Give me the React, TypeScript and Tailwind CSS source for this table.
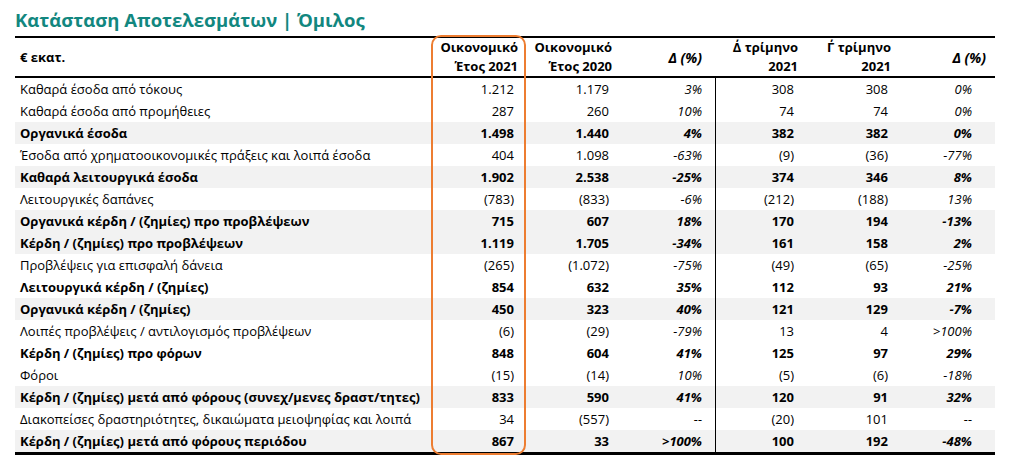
type Row = {
  label: string;
  values: string[];
  bold?: boolean;
  shaded?: boolean;
};

const rows: Row[] = [
  { label: "Καθαρά έσοδα από τόκους", values: ["1.212", "1.179", "3%", "308", "308", "0%"] },
  { label: "Καθαρά έσοδα από προμήθειες", values: ["287", "260", "10%", "74", "74", "0%"] },
  { label: "Οργανικά έσοδα", values: ["1.498", "1.440", "4%", "382", "382", "0%"], bold: true, shaded: true },
  { label: "Έσοδα από χρηματοοικονομικές πράξεις και λοιπά έσοδα", values: ["404", "1.098", "-63%", "(9)", "(36)", "-77%"] },
  { label: "Καθαρά λειτουργικά έσοδα", values: ["1.902", "2.538", "-25%", "374", "346", "8%"], bold: true, shaded: true },
  { label: "Λειτουργικές δαπάνες", values: ["(783)", "(833)", "-6%", "(212)", "(188)", "13%"] },
  { label: "Οργανικά κέρδη / (ζημίες) προ προβλέψεων", values: ["715", "607", "18%", "170", "194", "-13%"], bold: true, shaded: true },
  { label: "Κέρδη / (ζημίες) προ προβλέψεων", values: ["1.119", "1.705", "-34%", "161", "158", "2%"], bold: true, shaded: true },
  { label: "Προβλέψεις για επισφαλή δάνεια", values: ["(265)", "(1.072)", "-75%", "(49)", "(65)", "-25%"] },
  { label: "Λειτουργικά κέρδη / (ζημίες)", values: ["854", "632", "35%", "112", "93", "21%"], bold: true },
  { label: "Οργανικά κέρδη / (ζημίες)", values: ["450", "323", "40%", "121", "129", "-7%"], bold: true, shaded: true },
  { label: "Λοιπές προβλέψεις / αντιλογισμός προβλέψεων", values: ["(6)", "(29)", "-79%", "13", "4", ">100%"] },
  { label: "Κέρδη / (ζημίες) προ φόρων", values: ["848", "604", "41%", "125", "97", "29%"], bold: true },
  { label: "Φόροι", values: ["(15)", "(14)", "10%", "(5)", "(6)", "-18%"] },
  { label: "Κέρδη / (ζημίες) μετά από φόρους (συνεχ/μενες δραστ/τητες)", values: ["833", "590", "41%", "120", "91", "32%"], bold: true, shaded: true },
  { label: "Διακοπείσες δραστηριότητες, δικαιώματα μειοψηφίας και λοιπά", values: ["34", "(557)", "--", "(20)", "101", "--"] },
  { label: "Κέρδη / (ζημίες) μετά από φόρους περιόδου", values: ["867", "33", ">100%", "100", "192", "-48%"], bold: true, shaded: true },
];

// right padding of each value column (body)
const bodyPad = ["pr-[12px]", "pr-[11px]", "pr-[13px]", "pr-[12px]", "pr-[12px]", "pr-[23px]"];
const cols = "grid grid-cols-[417px_94px_94px_95px_91px_94px_95px]";

export default function App() {
  return (
    <div className="w-[1015px] h-[469px] overflow-hidden bg-white text-black font-['Open_Sans',sans-serif] pl-[15px] pt-[8px]">
      <h1 className="text-[18.5px] leading-[24px] font-bold text-[#12877f] mb-[4px]">
        Κατάσταση Αποτελεσμάτων | Όμιλος
      </h1>

      <div className="relative w-[980px]">
        <div className="border-t-2 border-black" />

        {/* HEADER */}
        <div className={`${cols} h-[38px] text-[13px] leading-[19px] font-bold`}>
          <div className="flex items-center pl-[5px]">€ εκατ.</div>
          <div className="flex items-center justify-end text-right pr-[8px]">
            Οικονομικό
            <br />
            Έτος 2021
          </div>
          <div className="flex items-center justify-end text-right pr-[8px]">
            Οικονομικό
            <br />
            Έτος 2020
          </div>
          <div className="flex items-center justify-end pr-[13px] italic text-[14px]">Δ (%)</div>
          <div className="flex items-center justify-end text-right pr-[8px]">
            Δ΄ τρίμηνο
            <br />
            2021
          </div>
          <div className="flex items-center justify-end text-right pr-[9px]">
            Γ΄ τρίμηνο
            <br />
            2021
          </div>
          <div className="flex items-center justify-end pr-[9px] italic text-[14px]">Δ (%)</div>
        </div>

        <div className="border-t-2 border-black" />

        {/* BODY */}
        {rows.map((row) => (
          <div
            key={row.label}
            className={`${cols} h-[22px] text-[13px] leading-[22px] ${row.bold ? "font-bold" : "font-normal"} ${row.shaded ? "bg-[#f2f2f2]" : "bg-white"}`}
          >
            <div className="pl-[5px] whitespace-nowrap">{row.label}</div>
            {row.values.map((v, i) => (
              <div
                key={i}
                className={`text-right ${bodyPad[i]} ${i === 2 || i === 5 ? "italic" : ""} ${i === 3 ? "border-l border-black" : ""}`}
              >
                {v}
              </div>
            ))}
          </div>
        ))}

        <div className="border-t-[3px] border-black" />

        {/* highlight of current year */}
        <div className="absolute left-[416px] top-[-1px] w-[95px] h-[420px] border-2 border-[#ed7d31] rounded-[10px] pointer-events-none" />
      </div>
    </div>
  );
}
